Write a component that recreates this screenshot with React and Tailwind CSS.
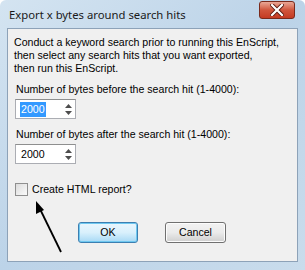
import React from "react";

function Spin({ selected }) {
  return (
    <div className="flex h-[20px] w-[61px] items-stretch border border-[#abadb3] border-t-[#8e8f8f] bg-white">
      <div className="flex flex-1 items-center pl-[4px]">
        <span className={selected ? "bg-[#3399ff] px-[1px] text-white leading-[15px]" : "px-[1px] leading-[15px]"}>2000</span>
      </div>
      <div className="flex w-[13px] flex-col items-center justify-center gap-[3px] pr-[1px]">
        <svg width="7" height="4" viewBox="0 0 7 4"><path d="M3.5 0 L7 4 L0 4 Z" fill="#4d4d4d" /></svg>
        <svg width="7" height="4" viewBox="0 0 7 4"><path d="M0 0 L7 0 L3.5 4 Z" fill="#4d4d4d" /></svg>
      </div>
    </div>
  );
}

export default function App() {
  return (
    <div className="relative flex h-[270px] w-[305px] flex-col overflow-hidden rounded-t-[6px] bg-gradient-to-br from-[#d4e4f1] via-[#bcd3e8] to-[#c9dcec] font-['Liberation_Sans',sans-serif] text-[10.6px] text-black">
      {/* title bar */}
      <div className="flex h-[28px] items-start justify-between pl-[9px] pr-[10px]">
        <span className="mt-[7px] font-['Noto_Sans',sans-serif] text-[11.3px] leading-[16px] text-[#1a1a1a]">
          Export x bytes around search hits
        </span>
        <div className="mt-[1px] flex h-[18px] w-[36px] items-center justify-center rounded-[3px] border border-[#7a2a1c] bg-gradient-to-b from-[#e9a796] via-[#d0553c] to-[#c43a22]">
          <svg width="14" height="12" viewBox="0 0 14 12">
            <path d="M2 1 L12 11 M12 1 L2 11" stroke="#5a1a10" strokeWidth="4" strokeLinecap="square" />
            <path d="M2 1 L12 11 M12 1 L2 11" stroke="#ffffff" strokeWidth="2.2" strokeLinecap="square" />
          </svg>
        </div>
      </div>
      {/* content */}
      <div className="mx-[7px] flex flex-1 flex-col border border-[#8da2b8] bg-[#f0f0f0] px-[6px] pt-[7px]">
        <p className="leading-[13px]">
          Conduct a keyword search prior to running this EnScript,
          <br />
          then select any search hits that you want exported,
          <br />
          then run this EnScript.
        </p>
        <div className="mt-[8px] pl-[2px] leading-[13px]">Number of bytes before the search hit (1-4000):</div>
        <div className="mt-[3px] pl-[1px]">
          <Spin selected />
        </div>
        <div className="mt-[9px] pl-[2px] leading-[13px]">Number of bytes after the search hit (1-4000):</div>
        <div className="mt-[3px] pl-[1px]">
          <Spin />
        </div>
        <div className="mt-[19px] flex items-center gap-[4px] pl-[1px]">
          <div className="h-[13px] w-[13px] border border-[#8f8f8f] bg-gradient-to-br from-[#dcdcdc] to-[#fbfbfb]" />
          <span className="leading-[13px]">Create HTML report?</span>
        </div>
        <div className="mt-[26px] flex gap-[27px] pl-[64px]">
          <button className="h-[21px] w-[60px] rounded-[3px] border border-[#3c7fb1] bg-gradient-to-b from-[#eaf6fd] via-[#d9f0fc] to-[#a7d9f5] shadow-[inset_0_0_0_1px_#6fc8f0] text-[10.6px]">
            OK
          </button>
          <button className="h-[21px] w-[61px] rounded-[3px] border border-[#707070] bg-gradient-to-b from-[#f2f2f2] via-[#ebebeb] to-[#cfcfcf] shadow-[inset_0_0_0_1px_#fcfcfc] text-[10.6px]">
            Cancel
          </button>
        </div>
      </div>
      <div className="h-[8px]" />
      {/* annotation arrow */}
      <svg className="absolute left-0 top-0" width="305" height="270" viewBox="0 0 305 270">
        <path d="M61 252 L40 209" stroke="#000" strokeWidth="1.8" />
        <path d="M36 201 L36 214 L44 210 Z" fill="#000" />
      </svg>
    </div>
  );
}
